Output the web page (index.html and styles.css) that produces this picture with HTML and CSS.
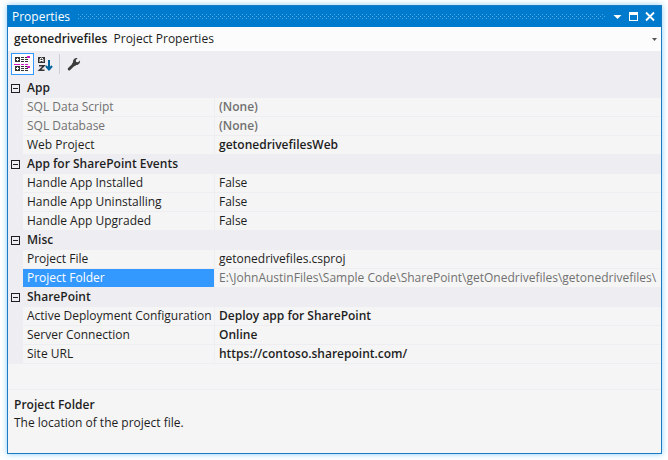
FILE: index.html
```html
<!DOCTYPE html>
<html lang="en">
<head>
<meta charset="utf-8">
<meta name="viewport" content="width=device-width, initial-scale=1">
<title>Properties</title>
<link rel="stylesheet" href="styles.css">
</head>
<body>
<main class="window">
  <header class="titlebar">
    <h1 class="title">Properties</h1>
    <div class="grip"></div>
    <div class="window-actions">
      <button type="button" class="window-button" aria-label="Window position"><svg width="9" height="11" viewBox="0 0 9 11"><path d="M0.5 4h8l-4 4z" fill="#fff"/></svg></button>
      <button type="button" class="window-button" aria-label="Maximize"><svg width="9" height="11" viewBox="0 0 9 11"><path d="M0 1h9v9H0zM1 4v5h7V4z" fill="#fff" fill-rule="evenodd"/></svg></button>
      <button type="button" class="window-button" aria-label="Close"><svg width="10" height="11" viewBox="0 0 10 11"><path d="M1 1.5l8 8M9 1.5l-8 8" stroke="#fff" stroke-width="1.8"/></svg></button>
    </div>
  </header>
  <button type="button" class="object-picker" aria-haspopup="listbox">
    <span><strong>getonedrivefiles</strong>&nbsp; Project Properties</span>
    <svg width="5" height="3" viewBox="0 0 5 3"><path d="M0 0h5L2.500 3z" fill="#555"/></svg>
  </button>
  <div class="toolbar" role="toolbar" aria-label="Property view">
    <button type="button" class="tool tool-active" aria-label="Categorized" aria-pressed="true">
      <svg width="17" height="16" viewBox="0 0 17 16">
        <path d="M1 1h5v5H1zM1 10h5v5H1z" fill="#333"/>
        <path d="M2 3h3v1H2zM3 2h1v3H3zM2 12h3v1H2zM3 11h1v3H3z" fill="#fff"/>
        <path d="M7 1h3v1H7zM7 3h3v1H7zM7 5h3v1H7zM7 10h3v1H7zM7 12h3v1H7zM7 14h3v1H7zM11 3h3v1h-3zM11 5h3v1h-3zM11 1h3v1h-3zM11 10h3v1h-3zM11 12h3v1h-3zM11 14h3v1h-3z" fill="#333"/>
        <path d="M0 8h6v1H0zM7 8h3v1H7zM11 8h3v1h-3zM13 0h3v2h-3zM13 10h3v2h-3z" fill="#d119c8"/>
      </svg>
    </button>
    <button type="button" class="tool" aria-label="Alphabetical">
      <svg width="16" height="16" viewBox="0 0 16 16">
        <path d="M1 1h7v6H1z" fill="#333"/>
        <path d="M3 6V3l1-1h1l1 1v3M3 4.500h3" fill="none" stroke="#fff"/>
        <path d="M2 9.800h5L2.500 14.200H7.500" fill="none" stroke="#333" stroke-width="1.600"/>
        <path d="M12 4v9M9 10l3 3.500L15 10" fill="none" stroke="#00639c" stroke-width="2"/>
      </svg>
    </button>
    <span class="separator"></span>
    <button type="button" class="tool" aria-label="Property pages">
      <svg width="16" height="16" viewBox="0 0 16 16">
        <path d="M3.200 13L8.500 7.700" stroke="#3d3d3d" stroke-width="3" stroke-linecap="round"/>
        <path d="M11.600 2.200L9.800 4l0.300 2 2 0.300 1.900-1.900c0.500 2.100-1.100 4.700-3.800 4.500L8.800 10.200 6 7.500l1-1.200c-0.300-2.700 2-4.700 4.600-4.100z" fill="#3d3d3d"/>
      </svg>
    </button>
  </div>
  <table class="grid">
    <colgroup><col class="col-gutter"><col class="col-name"><col></colgroup>
    <tbody>
      <tr class="category"><td><button type="button" class="toggle" aria-label="Collapse App"></button></td><th colspan="2" scope="rowgroup">App</th></tr>
      <tr class="muted"><td></td><th scope="row">SQL Data Script</th><td><strong>(None)</strong></td></tr>
      <tr class="muted"><td></td><th scope="row">SQL Database</th><td><strong>(None)</strong></td></tr>
      <tr><td></td><th scope="row">Web Project</th><td><strong>getonedrivefilesWeb</strong></td></tr>
    </tbody>
    <tbody>
      <tr class="category"><td><button type="button" class="toggle" aria-label="Collapse App for SharePoint Events"></button></td><th colspan="2" scope="rowgroup">App for SharePoint Events</th></tr>
      <tr><td></td><th scope="row">Handle App Installed</th><td>False</td></tr>
      <tr><td></td><th scope="row">Handle App Uninstalling</th><td>False</td></tr>
      <tr><td></td><th scope="row">Handle App Upgraded</th><td>False</td></tr>
    </tbody>
    <tbody>
      <tr class="category"><td><button type="button" class="toggle" aria-label="Collapse Misc"></button></td><th colspan="2" scope="rowgroup">Misc</th></tr>
      <tr><td></td><th scope="row">Project File</th><td>getonedrivefiles.csproj</td></tr>
      <tr class="muted selected"><td></td><th scope="row">Project Folder</th><td>E:\JohnAustinFiles\Sample Code\SharePoint\getOnedrivefiles\getonedrivefiles\</td></tr>
    </tbody>
    <tbody>
      <tr class="category"><td><button type="button" class="toggle" aria-label="Collapse SharePoint"></button></td><th colspan="2" scope="rowgroup">SharePoint</th></tr>
      <tr><td></td><th scope="row">Active Deployment Configuration</th><td><strong>Deploy app for SharePoint</strong></td></tr>
      <tr><td></td><th scope="row">Server Connection</th><td><strong>Online</strong></td></tr>
      <tr><td></td><th scope="row">Site URL</th><td><strong>https://contoso.sharepoint.com/</strong></td></tr>
    </tbody>
  </table>
  <section class="description">
    <h2>Project Folder</h2>
    <p>The location of the project file.</p>
  </section>
</main>
</body>
</html>
```
FILE: styles.css
```css
* {
  box-sizing: border-box;
}

body {
  display: flex;
  min-height: 100vh;
  margin: 0;
  padding: 5px 6px 6px 7px;
  background: #fff;
  color: #1e1e1e;
  font: 12px/18px "Open Sans", "Noto Sans", sans-serif;
}

button {
  padding: 0;
  border: 0;
  background: none;
  color: inherit;
  font: inherit;
}

strong {
  font-weight: 600;
}

svg {
  display: block;
}

.window {
  display: flex;
  flex: 1;
  flex-direction: column;
  min-width: 0;
  border: 1px solid #1a7bc4;
  background: #f5f5f5;
  box-shadow: 0 0 6px #8accf8;
}

.titlebar {
  display: flex;
  align-items: center;
  gap: 8px;
  height: 21px;
  padding: 0 6px 0 4px;
  background: #007acc;
  color: #fff;
}

.title {
  margin: 0;
  font-size: 12px;
  font-weight: 400;
}

.grip {
  flex: 1;
  height: 5px;
  background-image:
    linear-gradient(90deg, #59a8de 1px, transparent 1px),
    linear-gradient(90deg, transparent 2px, #59a8de 2px, #59a8de 3px, transparent 3px),
    linear-gradient(90deg, #59a8de 1px, transparent 1px);
  background-position: 0 0, 0 2px, 0 4px;
  background-repeat: repeat-x;
  background-size: 4px 1px;
}

.window-actions {
  display: flex;
  gap: 7px;
}

.object-picker {
  display: flex;
  align-items: center;
  justify-content: space-between;
  height: 24px;
  padding: 0 4px 0 6px;
  background: #fcfcfc;
  text-align: left;
}

.toolbar {
  display: flex;
  align-items: center;
  height: 28px;
  padding: 0 3px 2px;
  background: #eeeef2;
}

.tool {
  display: grid;
  place-items: center;
  width: 22px;
  height: 22px;
}

.tool-active {
  width: 23px;
  border: 1px solid #3399ff;
  background: #fcfcfc;
}

.separator {
  width: 1px;
  height: 20px;
  margin: 0 3px;
  background: #cccedb;
}

.grid {
  width: 100%;
  border-collapse: separate;
  border-spacing: 0;
  table-layout: fixed;
}

.col-gutter {
  width: 15px;
}

.col-name {
  width: 192px;
}

.grid th,
.grid td {
  height: 19px;
  padding: 0 0 0 4px;
  border-bottom: 1px solid #eeeef2;
  font-weight: 400;
  text-align: left;
  white-space: nowrap;
}

.grid tr > td:first-child {
  padding: 0 0 0 3px;
  background: #eeeef2;
}

.grid th[scope="row"] {
  border-right: 1px solid #eeeef2;
}

.grid .category th {
  background: #eeeef2;
  font-weight: 600;
}

.muted {
  color: #717171;
}

.grid .selected th {
  background: #3399ff;
  color: #fff;
}

.toggle {
  display: block;
  width: 9px;
  height: 9px;
  border: 1px solid #1e1e1e;
  background: linear-gradient(#1e1e1e, #1e1e1e) center / 5px 1px no-repeat;
}

.description {
  flex: 1;
  margin-top: 25px;
  padding: 6px;
  border-top: 1px solid #eeeef2;
}

.description h2,
.description p {
  margin: 0;
  font-size: 12px;
  line-height: 18px;
}

.description h2 {
  font-weight: 600;
}
```
